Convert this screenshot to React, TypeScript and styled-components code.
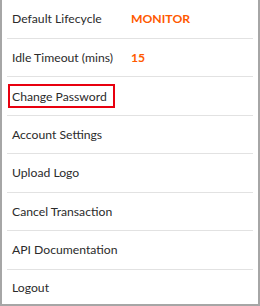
import { createGlobalStyle, styled } from "styled-components";

const GlobalStyle = createGlobalStyle`
  html, body {
    margin: 0;
    padding: 0;
    background: #ffffff;
  }
  body {
    font-family: Lato, "Open Sans", sans-serif;
  }
`;

const Panel = styled.div`
  width: 260px;
  height: 306px;
  box-sizing: border-box;
  border: 2px solid #a6a6a6;
  border-top: none;
  background: #ffffff;
  padding: 0 5px 0 5px;
`;

const Row = styled.div`
  display: flex;
  align-items: center;
  height: 37.5px;
  padding: 0 5px;
  border-bottom: 1px solid #e2e2e2;
  &:last-child {
    border-bottom: none;
    height: 36px;
  }
`;

const Label = styled.span<{ $highlight?: boolean }>`
  font-size: 12.2px;
  line-height: 15px;
  color: #2b2b2b;
  width: 119px;
  white-space: nowrap;
  ${(p) =>
    p.$highlight &&
    `
    width: auto;
    margin-left: -4px;
    padding: 3px 6px 2px 2px;
    border: 2px solid #e8000f;
  `}
`;

const Value = styled.span`
  font-size: 12.2px;
  font-weight: 700;
  color: #ff5a00;
`;

const items = [
  { label: "Default Lifecycle", value: "MONITOR" },
  { label: "Idle Timeout (mins)", value: "15" },
  { label: "Change Password", highlight: true },
  { label: "Account Settings" },
  { label: "Upload Logo" },
  { label: "Cancel Transaction" },
  { label: "API Documentation" },
  { label: "Logout" },
];

export default function App() {
  return (
    <>
      <GlobalStyle />
      <Panel>
        {items.map((item) => (
          <Row key={item.label}>
            <Label $highlight={item.highlight}>{item.label}</Label>
            {item.value && <Value>{item.value}</Value>}
          </Row>
        ))}
      </Panel>
    </>
  );
}
